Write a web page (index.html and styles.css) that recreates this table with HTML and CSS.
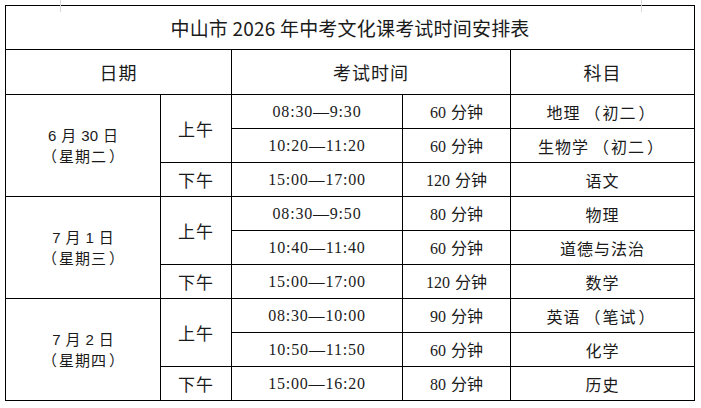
FILE: index.html
```html
<!DOCTYPE html>
<html lang="zh-CN">
<head>
<meta charset="utf-8">
<title>中山市 2026 年中考文化课考试时间安排表</title>
<link rel="stylesheet" href="styles.css">
</head>
<body>
<div class="page">
  <span class="ghost ghost-a"></span>
  <span class="ghost ghost-b"></span>
  <table class="schedule">
    <colgroup>
      <col class="c-date">
      <col class="c-half">
      <col class="c-time">
      <col class="c-dur">
      <col class="c-subj">
    </colgroup>
    <tr class="r-title"><td colspan="5" class="title">中山市 2026 年中考文化课考试时间安排表</td></tr>
    <tr class="r-head">
      <td colspan="2" class="head">日期</td>
      <td colspan="2" class="head">考试时间</td>
      <td class="head">科目</td>
    </tr>
    <tr class="r-data">
      <td rowspan="3" class="date"><div><span class="num">6</span><span class="sp"></span>月<span class="sp"></span><span class="num">30</span><span class="sp"></span>日</div><div class="week"><span class="pl">（</span>星期二<span class="pr">）</span></div></td>
      <td rowspan="2" class="half">上午</td>
      <td class="time">08:30—9:30</td>
      <td class="dur"><span class="num">60</span><span class="sp"></span>分钟</td>
      <td class="subj">地理<span class="pl">（</span>初二<span class="pr">）</span></td>
    </tr>
    <tr class="r-data">
      <td class="time">10:20—11:20</td>
      <td class="dur"><span class="num">60</span><span class="sp"></span>分钟</td>
      <td class="subj">生物学<span class="pl">（</span>初二<span class="pr">）</span></td>
    </tr>
    <tr class="r-data">
      <td class="half">下午</td>
      <td class="time">15:00—17:00</td>
      <td class="dur"><span class="num">120</span><span class="sp"></span>分钟</td>
      <td class="subj">语文</td>
    </tr>
    <tr class="r-data">
      <td rowspan="3" class="date"><div><span class="num">7</span><span class="sp"></span>月<span class="sp"></span><span class="num">1</span><span class="sp"></span>日</div><div class="week"><span class="pl">（</span>星期三<span class="pr">）</span></div></td>
      <td rowspan="2" class="half">上午</td>
      <td class="time">08:30—9:50</td>
      <td class="dur"><span class="num">80</span><span class="sp"></span>分钟</td>
      <td class="subj">物理</td>
    </tr>
    <tr class="r-data">
      <td class="time">10:40—11:40</td>
      <td class="dur"><span class="num">60</span><span class="sp"></span>分钟</td>
      <td class="subj">道德与法治</td>
    </tr>
    <tr class="r-data">
      <td class="half">下午</td>
      <td class="time">15:00—17:00</td>
      <td class="dur"><span class="num">120</span><span class="sp"></span>分钟</td>
      <td class="subj">数学</td>
    </tr>
    <tr class="r-data">
      <td rowspan="3" class="date"><div><span class="num">7</span><span class="sp"></span>月<span class="sp"></span><span class="num">2</span><span class="sp"></span>日</div><div class="week"><span class="pl">（</span>星期四<span class="pr">）</span></div></td>
      <td rowspan="2" class="half">上午</td>
      <td class="time">08:30—10:00</td>
      <td class="dur"><span class="num">90</span><span class="sp"></span>分钟</td>
      <td class="subj">英语<span class="pl">（</span>笔试<span class="pr">）</span></td>
    </tr>
    <tr class="r-data">
      <td class="time">10:50—11:50</td>
      <td class="dur"><span class="num">60</span><span class="sp"></span>分钟</td>
      <td class="subj">化学</td>
    </tr>
    <tr class="r-data">
      <td class="half">下午</td>
      <td class="time">15:00—16:20</td>
      <td class="dur"><span class="num">80</span><span class="sp"></span>分钟</td>
      <td class="subj">历史</td>
    </tr>
  </table>
</div>
</body>
</html>
```
FILE: styles.css
```css
html, body {
  margin: 0;
  padding: 0;
  background: #ffffff;
}
.page {
  position: relative;
  padding: 5px 0 0 5px;
  width: 701px;
  height: 408px;
  box-sizing: border-box;
  color: #1a1a1a;
  font-family: "Noto Sans CJK SC", "Noto Sans", sans-serif;
}
.ghost {
  position: absolute;
  top: 0;
  width: 1px;
  height: 12px;
  background: #d8d8d8;
}
.ghost-a { left: 60px; }
.ghost-b { left: 641px; }
.schedule {
  border-collapse: collapse;
  table-layout: fixed;
  width: 690px;
}
.schedule td {
  border: 1px solid #000;
  padding: 0;
  text-align: center;
  vertical-align: middle;
  font-size: 16px;
  line-height: 20px;
}
.c-date { width: 155px; }
.c-half { width: 71px; }
.c-time { width: 171px; }
.c-dur { width: 108px; }
.c-subj { width: 184px; }
.schedule .r-title td { height: 43px; }
.schedule .r-head td { height: 44px; }
.schedule .r-data td { height: 33px; }
.sp {
  display: inline-block;
  width: 5px;
}
.pl, .pr {
  display: inline-block;
  width: 1em;
}
.pl {
  text-align: right;
  margin: 0 2px 0 4px;
}
.pr {
  text-align: left;
  margin: 0 4px 0 2px;
}
.schedule .title {
  font-size: 19px;
  letter-spacing: 0.2px;
}
.schedule .head {
  font-size: 18px;
  letter-spacing: 1px;
}
.schedule .date {
  font-size: 15px;
  line-height: 20px;
}
.date .num {
  font-family: "Liberation Sans", sans-serif;
}
.date .week {
  letter-spacing: 1px;
}
.schedule .half {
  font-size: 17px;
  letter-spacing: 1px;
}
.schedule .time {
  font-family: "Liberation Serif", serif;
  font-size: 16px;
  letter-spacing: 0.8px;
}
.dur .num {
  font-family: "Liberation Serif", serif;
  font-size: 16px;
}
.schedule .subj {
  letter-spacing: 1px;
}
```
